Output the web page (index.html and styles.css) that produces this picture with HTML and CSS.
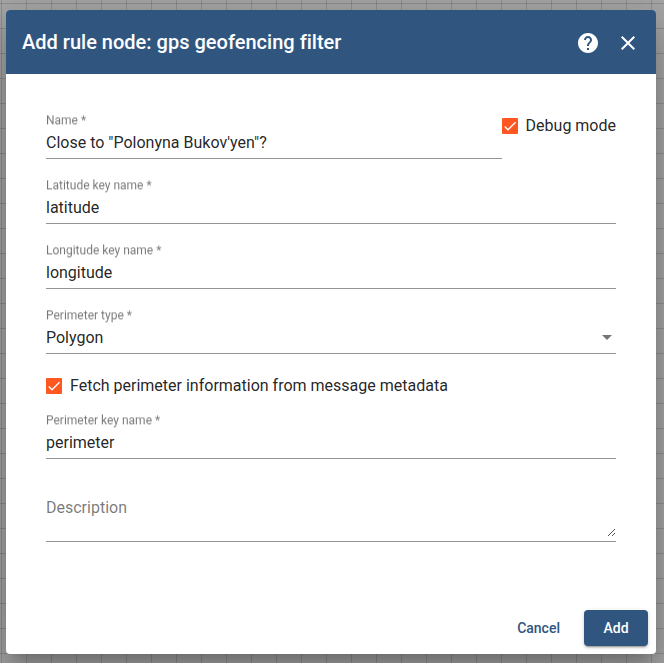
FILE: index.html
```html
<!DOCTYPE html>
<html lang="en">
<head>
<meta charset="utf-8">
<title>Add rule node</title>
<link rel="stylesheet" href="styles.css">
</head>
<body>
<div class="dialog">
  <header class="toolbar">
    <h2 class="title">Add rule node: gps geofencing filter</h2>
    <svg class="icon" viewBox="0 0 24 24"><path d="M12 2C6.480 2 2 6.480 2 12s4.480 10 10 10 10-4.480 10-10S17.520 2 12 2zm1 17h-2v-2h2v2zm2.070-7.750l-.9.920C13.450 12.900 13 13.500 13 15h-2v-.5c0-1.100.450-2.100 1.170-2.830l1.240-1.260c.370-.360.590-.860.590-1.410 0-1.100-.9-2-2-2s-2 .9-2 2H8c0-2.210 1.790-4 4-4s4 1.790 4 4c0 .880-.360 1.680-.930 2.250z"/></svg>
    <svg class="icon" viewBox="0 0 24 24"><path d="M19 6.410L17.590 5 12 10.590 6.410 5 5 6.410 10.590 12 5 17.590 6.410 19 12 13.410 17.590 19 19 17.590 13.410 12z"/></svg>
  </header>
  <main class="content">
    <div class="row">
      <div class="field name">
        <span class="label">Name *</span>
        <span class="value">Close to "Polonyna Bukov'yen"?</span>
      </div>
      <div class="check debug">
        <svg class="box" viewBox="0 0 24 24"><path d="M4.100 12.700L9 17.600 20.300 6.300"/></svg>
        <span>Debug mode</span>
      </div>
    </div>
    <div class="field">
      <span class="label">Latitude key name *</span>
      <span class="value">latitude</span>
    </div>
    <div class="field">
      <span class="label">Longitude key name *</span>
      <span class="value">longitude</span>
    </div>
    <div class="field">
      <span class="label">Perimeter type *</span>
      <span class="value select">Polygon<i class="arrow"></i></span>
    </div>
    <div class="check fetch">
      <svg class="box" viewBox="0 0 24 24"><path d="M4.100 12.700L9 17.600 20.300 6.300"/></svg>
      <span>Fetch perimeter information from message metadata</span>
    </div>
    <div class="field">
      <span class="label">Perimeter key name *</span>
      <span class="value">perimeter</span>
    </div>
    <div class="area">
      <span>Description</span>
      <svg class="grip" viewBox="0 0 7 7"><path d="M0 6h1v1H0zM1 5h1v1H1zM2 4h1v1H2zM3 3h1v1H3zM4 2h1v1H4zM5 1h1v1H5zM6 0h1v1H6zM4 6h1v1H4zM5 5h1v1H5zM6 4h1v1H6z"/></svg>
    </div>
  </main>
  <footer class="actions">
    <button class="button">Cancel</button>
    <button class="button primary">Add</button>
  </footer>
</div>
</body>
</html>
```
FILE: styles.css
```css
* { box-sizing: border-box; }
body {
  margin: 0;
  height: 663px;
  padding: 10px 8px 9px 6px;
  overflow: hidden;
  font: 16px/24px Roboto, sans-serif;
  color: rgba(0, 0, 0, .87);
  background-color: #a6a6a6;
  background-image:
    linear-gradient(to right, rgba(0, 0, 0, .14) 1px, transparent 1px),
    linear-gradient(to bottom, rgba(0, 0, 0, .14) 1px, transparent 1px);
  background-size: 25px 25px;
  background-position: 1px 3px;
}
.dialog {
  display: flex;
  flex-direction: column;
  height: 644px;
  background: #fff;
  border-radius: 4px;
  box-shadow: 0 11px 15px -7px rgba(0, 0, 0, .2), 0 24px 38px 3px rgba(0, 0, 0, .14), 0 9px 46px 8px rgba(0, 0, 0, .12);
}
.toolbar {
  display: flex;
  align-items: center;
  gap: 16px;
  height: 64px;
  padding: 0 16px;
  color: #fff;
  background: #305680;
  border-radius: 4px 4px 0 0;
}
.title { flex: 1; margin: 0; font-size: 20px; font-weight: 500; line-height: 32px; letter-spacing: .01px; }
.icon { width: 24px; height: 24px; fill: currentColor; margin-top: 2px; }
.content { flex: 1; padding: 20px 40px 0; }
.row { display: flex; }
.field {
  display: flex;
  flex-direction: column;
  height: 65px;
  padding-top: 17px;
  border-bottom: 1px solid #949494;
}
.name { flex: 1; }
.label {
  width: max-content;
  height: 20px;
  line-height: 18px;
  transform: translateY(.6px) scale(.75) perspective(100px) translateZ(.001px);
  transform-origin: 0 50%;
  color: rgba(0, 0, 0, .54);
}
.value { height: 24px; }
.select { display: flex; align-items: center; justify-content: space-between; }
.arrow {
  margin: 0 4px 2px 0;
  border: 5px solid transparent;
  border-top-color: #757575;
  border-bottom: 0;
}
.check { display: flex; align-items: center; gap: 8px; height: 24px; }
.debug { margin-top: 20px; }
.fetch { margin: 20px 0 -4px; }
.box { width: 16px; height: 16px; background: #ff5722; border-radius: 1px; fill: none; stroke: #fff; stroke-width: 2.130px; }
.area {
  display: flex;
  justify-content: space-between;
  height: 83px;
  padding-top: 37px;
  border-bottom: 1px solid #949494;
  color: rgba(0, 0, 0, .54);
}
.grip { width: 7px; height: 7px; margin: 33px 1px 0 0; fill: #555; shape-rendering: crispEdges; }
.actions { display: flex; justify-content: flex-end; gap: 8px; padding: 8px; }
.button {
  height: 36px;
  padding: 0 16px;
  border: 0;
  border-radius: 4px;
  font: 500 14px/36px Roboto, sans-serif;
  color: #305680;
  background: transparent;
}
.primary {
  min-width: 64px;
  color: #fff;
  background: #305680;
  box-shadow: 0 3px 1px -2px rgba(0, 0, 0, .2), 0 2px 2px rgba(0, 0, 0, .14), 0 1px 5px rgba(0, 0, 0, .12);
}
```
